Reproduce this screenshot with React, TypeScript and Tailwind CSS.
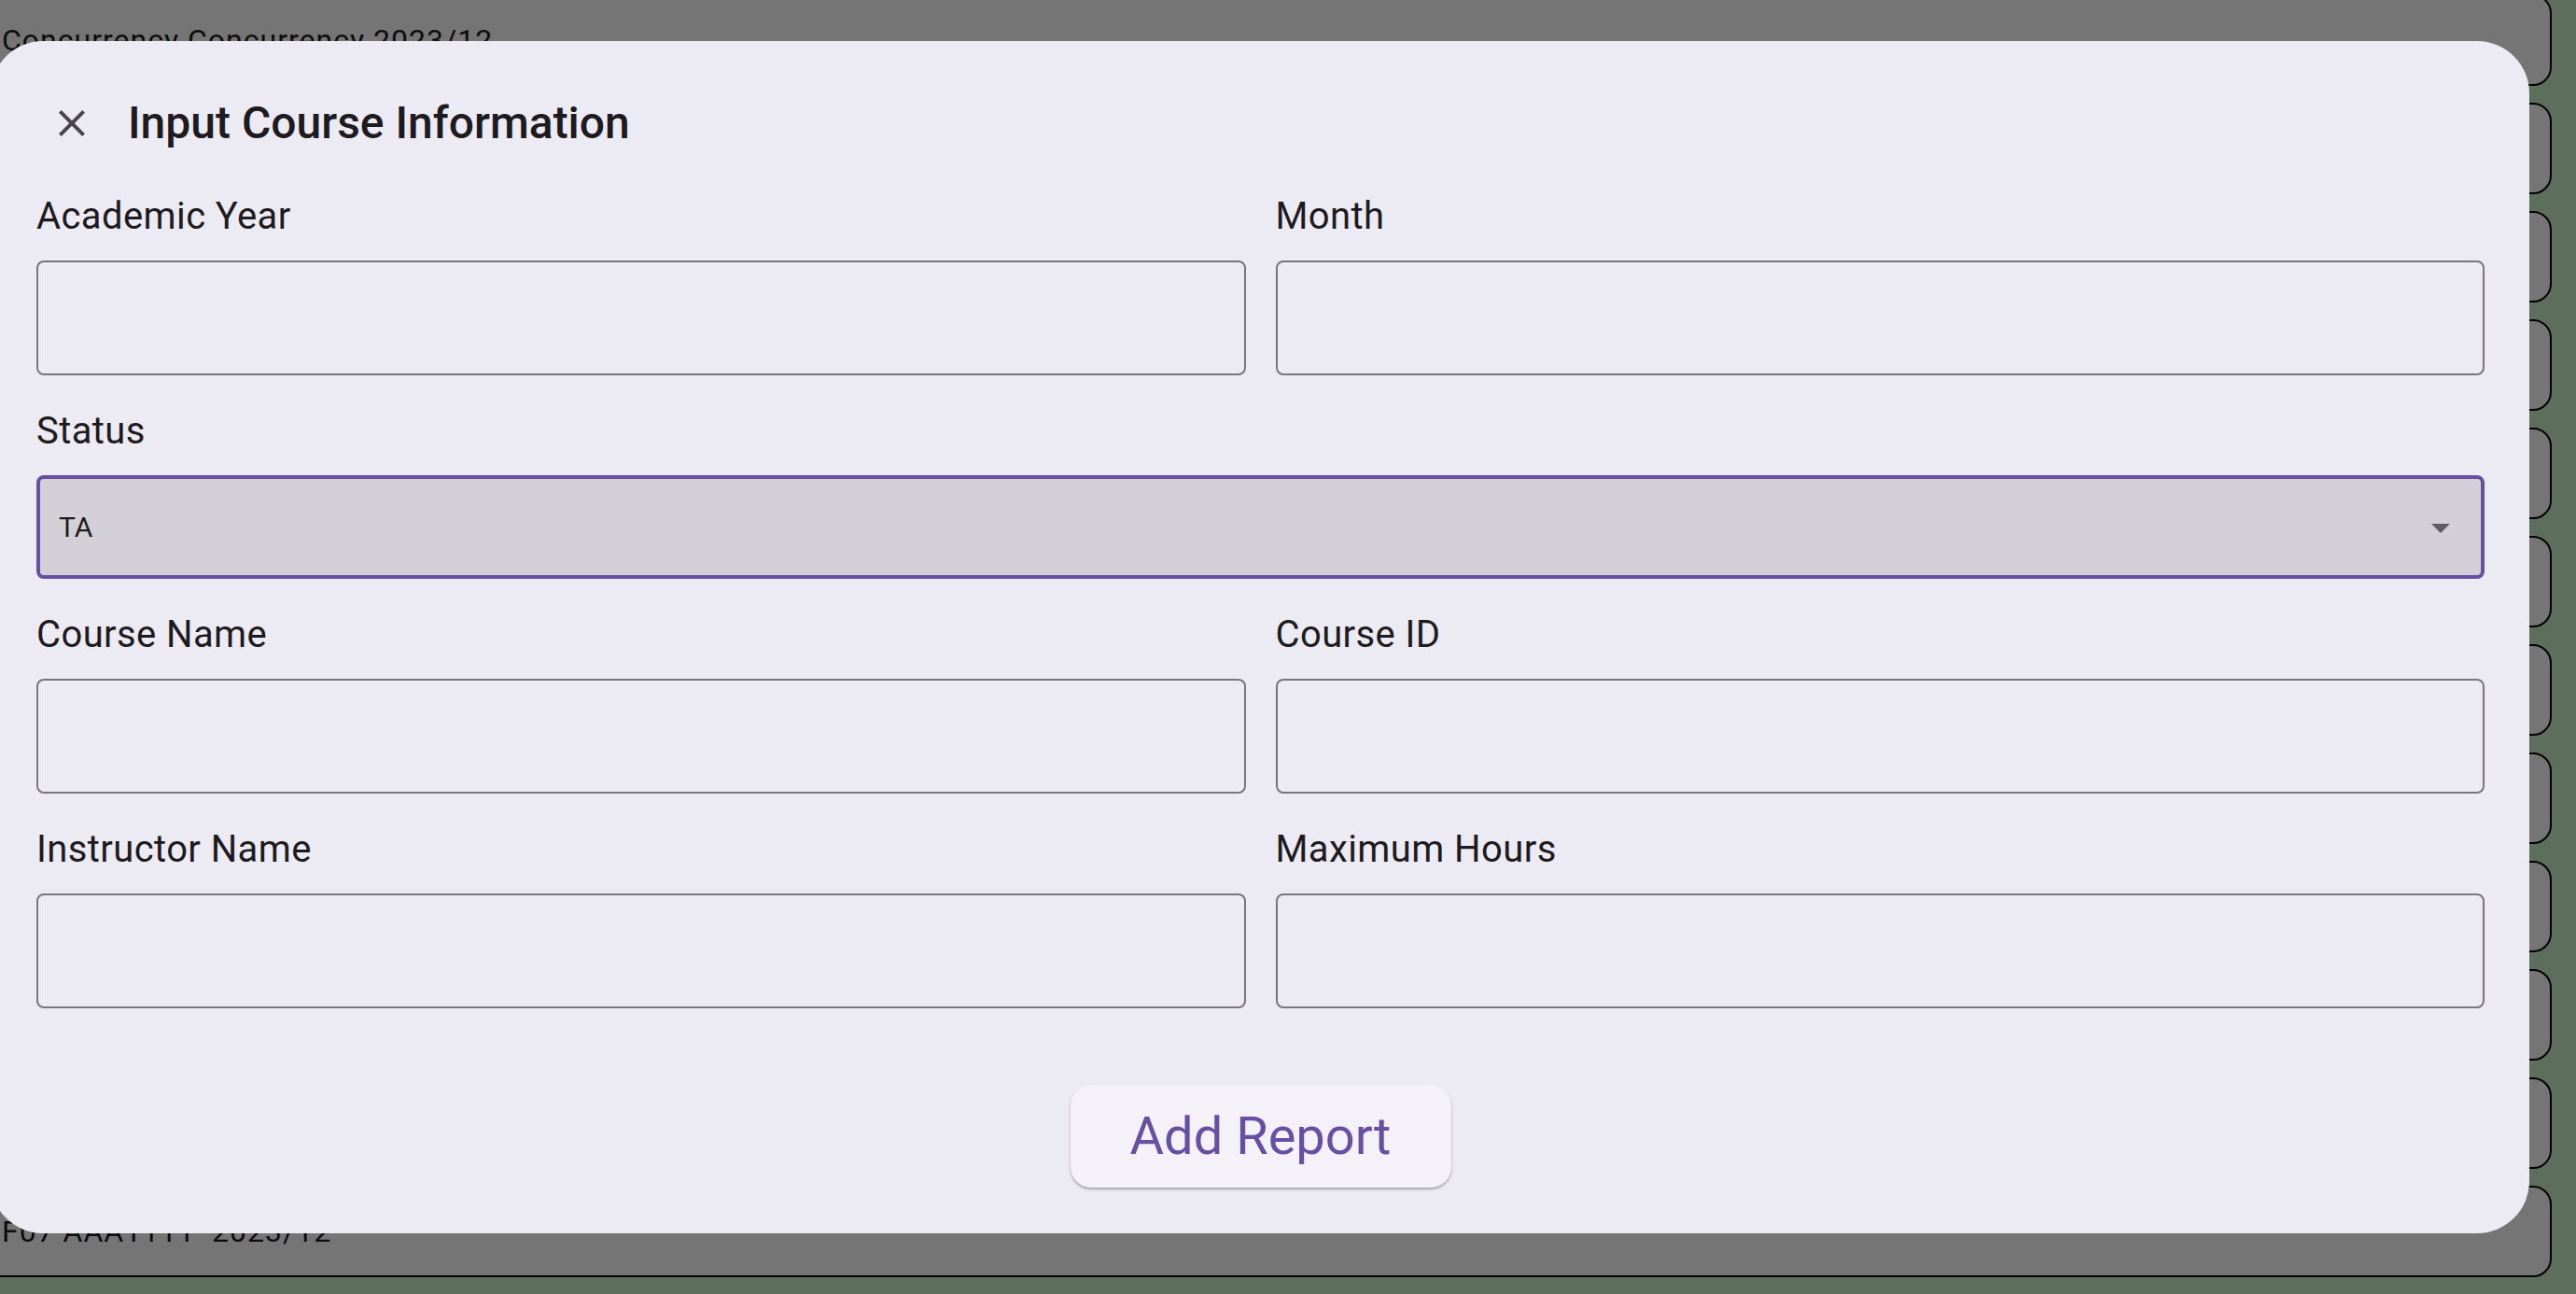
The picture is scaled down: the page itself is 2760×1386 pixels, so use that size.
const reports = [
  "Concurrency Concurrency 2023/12",
  "",
  "",
  "",
  "",
  "",
  "",
  "",
  "",
  "",
  "",
  "F07 AAA1111  2023/12",
];

const Field = ({ label, className = "" }: { label: string; className?: string }) => (
  <div className={`flex flex-col ${className}`}>
    <label className="text-[40px] leading-[48px] tracking-[0.4px] text-[#1d1b20]">{label}</label>
    <input
      type="text"
      className="mt-[23px] h-[123px] w-full rounded-[8px] border-2 border-[#79747e] bg-transparent px-[24px] text-[32px] outline-none"
    />
  </div>
);

export default function App() {
  return (
    <div
      className="relative h-[1386px] overflow-hidden bg-[#ceefca]"
      style={{ fontFamily: "Roboto, 'Liberation Sans', sans-serif" }}
    >
      {/* report list behind the dialog */}
      <div className="-mt-[6px] flex flex-col gap-[18px] pr-[26px]">
        {reports.map((r, i) => (
          <div
            key={i}
            className="-ml-[40px] flex h-[98px] shrink-0 items-center rounded-[20px] border-2 border-black bg-white pl-[40px]"
          >
            {r && <span className="whitespace-pre text-[32px] tracking-[1px] text-[#1d1b20]">{r}</span>}
          </div>
        ))}
      </div>

      {/* scrim */}
      <div className="fixed inset-0 bg-black/[0.54]" />

      {/* dialog */}
      <div className="fixed left-[-10px] top-[44px] w-[2720px] rounded-[56px] bg-[#eceaf3] pb-[49px] pl-[49px] pr-[48px] pt-[60px]">
        <div className="flex h-[56px] items-center">
          <button className="ml-[14px] flex h-[48px] w-[48px] items-center justify-center">
            <svg viewBox="0 0 24 24" className="h-[48px] w-[48px]" fill="#49454f">
              <path d="M19 6.41L17.59 5 12 10.59 6.41 5 5 6.41 10.59 12 5 17.59 6.41 19 12 13.41 17.59 19 19 17.59 13.41 12z" />
            </svg>
          </button>
          <h2 className="ml-[36px] text-[48px] font-medium leading-[56px] text-[#1d1b20]">
            Input Course Information
          </h2>
        </div>

        <div className="mt-[48px] grid grid-cols-2 gap-x-[32px] gap-y-[36px]">
          <Field label="Academic Year" />
          <Field label="Month" />
          <div className="col-span-2 flex flex-col">
            <label className="text-[40px] leading-[48px] tracking-[0.4px] text-[#1d1b20]">Status</label>
            <div className="mt-[23px] flex h-[111px] items-center justify-between rounded-[8px] border-[4px] border-[#6750a4] bg-[#d2cfd7] pl-[20px] pr-[19px]">
              <span className="text-[30px] text-[#1d1b20]">TA</span>
              <svg viewBox="0 0 24 24" className="h-[48px] w-[48px]" fill="#5f5c63">
                <path d="M7 10l5 5 5-5z" />
              </svg>
            </div>
          </div>
          <Field label="Course Name" />
          <Field label="Course ID" />
          <Field label="Instructor Name" />
          <Field label="Maximum Hours" />
        </div>

        <div className="mt-[82px] flex justify-center">
          <button className="flex h-[110px] w-[408px] items-center justify-center rounded-[22px] bg-[#f4f1f8] text-[56px] leading-[64px] text-[#6750a4] shadow-[0_2px_3px_rgba(0,0,0,0.3)]">
            Add Report
          </button>
        </div>
      </div>
    </div>
  );
}
